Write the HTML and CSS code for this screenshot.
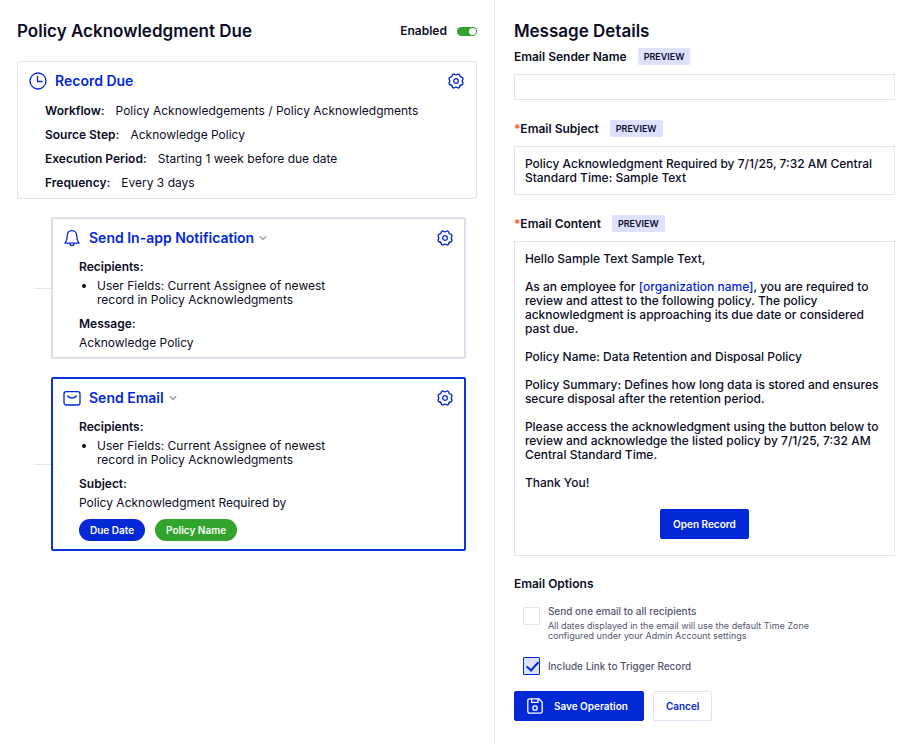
FILE: index.html
```html
<!DOCTYPE html>
<html lang="en">
<head>
  <meta charset="UTF-8">
  <meta name="viewport" content="width=device-width, initial-scale=1.0">
  <title>Policy Acknowledgment Due</title>
  <link rel="stylesheet" href="styles.css">
</head>
<body>
  <!-- Shared icons -->
  <svg class="sprite" aria-hidden="true">
    <symbol id="gear" viewBox="0 0 16 16">
      <path d="M5.9 .9 Q8 2.7 10.1 .9 L11.5 1.5 Q11.7 4.3 14.5 4.5 L15.1 5.9 Q13.3 8 15.1 10.1 L14.5 11.5 Q11.7 11.7 11.5 14.5 L10.1 15.1 Q8 13.3 5.9 15.1 L4.5 14.5 Q4.3 11.7 1.5 11.5 L.9 10.1 Q2.7 8 .9 5.9 L1.5 4.5 Q4.3 4.3 4.5 1.5Z"/>
      <circle cx="8" cy="8" r="2.3"/>
    </symbol>
    <symbol id="chevron" viewBox="0 0 8 8">
      <path d="M1.2 2.8 4 5.4 6.8 2.8"/>
    </symbol>
  </svg>

  <div class="layout">
    <main class="flow">
      <header class="flow-header">
        <h1>Policy Acknowledgment Due</h1>
        <label class="enabled">Enabled <input type="checkbox" class="toggle" checked></label>
      </header>

      <section class="card trigger">
        <div class="card-head">
          <svg class="icon" viewBox="0 0 18 18"><circle cx="9" cy="9" r="8"/><path d="M8.5 4.5V9.5H13"/></svg>
          <h2>Record Due</h2>
          <button class="settings" aria-label="Record Due settings"><svg><use href="#gear"/></svg></button>
        </div>
        <dl class="details">
          <div><dt>Workflow:</dt><dd>Policy Acknowledgements / Policy Acknowledgments</dd></div>
          <div><dt>Source Step:</dt><dd>Acknowledge Policy</dd></div>
          <div><dt>Execution Period:</dt><dd>Starting 1 week before due date</dd></div>
          <div><dt>Frequency:</dt><dd>Every 3 days</dd></div>
        </dl>
      </section>

      <section class="card step">
        <div class="card-head">
          <svg class="icon" viewBox="0 0 18 18"><path d="M2 14.2C3.4 12.5 4.2 10.5 4.2 7.3 4.2 4 6 1.7 9 1.7S13.8 4 13.8 7.3C13.8 10.5 14.6 12.5 16 14.2Z"/><path d="M6.8 14.6C7 16 7.9 16.6 9 16.6S11 16 11.2 14.6"/></svg>
          <h2><button class="step-name">Send In-app Notification <svg><use href="#chevron"/></svg></button></h2>
          <button class="settings" aria-label="Notification settings"><svg><use href="#gear"/></svg></button>
        </div>
        <div class="step-body">
          <h3>Recipients:</h3>
          <ul>
            <li>User Fields: Current Assignee of newest record in Policy Acknowledgments</li>
          </ul>
          <h3>Message:</h3>
          <p>Acknowledge Policy</p>
        </div>
      </section>

      <section class="card step active">
        <div class="card-head">
          <svg class="icon" viewBox="0 0 18 18"><rect x="1" y="2.6" width="16" height="13.4" rx="2.2"/><path d="M4.6 7C6.8 9.7 11.2 9.7 13.4 7"/></svg>
          <h2><button class="step-name">Send Email <svg><use href="#chevron"/></svg></button></h2>
          <button class="settings" aria-label="Email settings"><svg><use href="#gear"/></svg></button>
        </div>
        <div class="step-body">
          <h3>Recipients:</h3>
          <ul>
            <li>User Fields: Current Assignee of newest record in Policy Acknowledgments</li>
          </ul>
          <h3>Subject:</h3>
          <p>Policy Acknowledgment Required by</p>
          <div class="pills">
            <span class="pill">Due Date</span>
            <span class="pill green">Policy Name</span>
          </div>
        </div>
      </section>
    </main>

    <form class="message">
      <h1>Message Details</h1>

      <div class="field-label">
        <label for="sender">Email Sender Name</label>
        <button type="button" class="preview">PREVIEW</button>
      </div>
      <input type="text" id="sender" class="box">

      <div class="field-label">
        <label for="subject"><span class="required">*</span>Email Subject</label>
        <button type="button" class="preview">PREVIEW</button>
      </div>
      <textarea id="subject" class="box" rows="2">Policy Acknowledgment Required by 7/1/25, 7:32 AM Central Standard Time: Sample Text</textarea>

      <div class="field-label">
        <span id="content-label"><span class="required">*</span>Email Content</span>
        <button type="button" class="preview">PREVIEW</button>
      </div>
      <div class="box email" role="group" aria-labelledby="content-label">
        <p>Hello Sample Text Sample Text,</p>
        <p>As an employee for <a href="#">[organization name]</a>, you are required to review and attest to the following policy. The policy acknowledgment is approaching its due date or considered past due.</p>
        <p>Policy Name: Data Retention and Disposal Policy</p>
        <p>Policy Summary: Defines how long data is stored and ensures secure disposal after the retention period.</p>
        <p>Please access the acknowledgment using the button below to review and acknowledge the listed policy by 7/1/25, 7:32 AM Central Standard Time.</p>
        <p>Thank You!</p>
        <button type="button" class="btn primary open">Open Record</button>
      </div>

      <h3 class="options-title">Email Options</h3>
      <div class="option">
        <input type="checkbox" id="one-email">
        <label for="one-email">Send one email to all recipients
          <small>All dates displayed in the email will use the default Time Zone configured under your Admin Account settings</small>
        </label>
      </div>
      <div class="option single">
        <input type="checkbox" id="include-link" checked>
        <label for="include-link">Include Link to Trigger Record</label>
      </div>

      <div class="actions">
        <button type="submit" class="btn primary save">
          <svg viewBox="0 0 16 16"><path d="M2.6.8H11.8L15.2 4.2V13.4Q15.2 15.2 13.4 15.2H2.6Q.8 15.2.8 13.4V2.6Q.8.8 2.6.8Z"/><path d="M4.6 1V4.4H11V1"/><circle cx="8" cy="10" r="2.2"/></svg>
          Save Operation
        </button>
        <button type="button" class="btn">Cancel</button>
      </div>
    </form>
  </div>
</body>
</html>
```
FILE: styles.css
```css
* {
  box-sizing: border-box;
}
body {
  margin: 0;
  font-family: Inter, sans-serif;
  font-size: 12px;
  line-height: 14px;
  color: #0d0d26;
  background: #fff;
}
h1, h2, h3, p, ul, dl, dd {
  margin: 0;
}
h1 {
  font-size: 17px;
  line-height: 22px;
  font-weight: 600;
}
h2 {
  font-size: 14px;
  line-height: 18px;
  font-weight: 600;
  color: #0328d6;
}
h3 {
  font-size: 12px;
  line-height: 14px;
  font-weight: 600;
}
button {
  font: inherit;
  color: inherit;
  padding: 0;
  border: 0;
  background: none;
  cursor: pointer;
}
svg {
  fill: none;
  stroke: #0328d6;
  stroke-width: 1.3;
  stroke-linecap: round;
  stroke-linejoin: round;
}
.sprite {
  display: none;
}
.layout {
  display: grid;
  grid-template-columns: 117fr 100fr;
  min-height: 100vh;
}

/* Left side */
.flow {
  padding: 20px 17px;
}
.flow-header {
  display: flex;
  justify-content: space-between;
  align-items: center;
  margin-bottom: 19px;
}
.enabled {
  display: flex;
  align-items: center;
  gap: 10px;
  font-weight: 600;
}
.toggle {
  appearance: none;
  display: flex;
  justify-content: flex-end;
  width: 20px;
  height: 9px;
  margin: 0;
  padding: 1px;
  border-radius: 5px;
  background: #30a42b;
}
.toggle::before {
  content: "";
  width: 7px;
  height: 7px;
  border-radius: 50%;
  background: #fff;
}
.toggle:not(:checked) {
  justify-content: flex-start;
  background: #b5b5c6;
}
.card {
  border: 1px solid #e2e2f0;
  border-radius: 3px;
  background: #fff;
}
.card-head {
  display: flex;
  align-items: center;
}
.icon {
  width: 18px;
  height: 18px;
  margin-right: 8px;
}
.settings {
  width: 16px;
  height: 16px;
  margin-left: auto;
}
.settings svg {
  display: block;
  width: 16px;
  height: 16px;
}
.trigger {
  padding: 10px 12px 8px 11px;
}
.details {
  display: grid;
  gap: 10px;
  padding: 14px 0 0 16px;
}
.details div {
  display: flex;
  gap: 11px;
}
.details dt {
  font-weight: 600;
}
.step {
  position: relative;
  margin: 18px 11px 0 34px;
  padding: 10px 11px 7px 10px;
  border-width: 2px;
  border-color: #dcdeec;
  border-radius: 2px;
}
.step::before {
  content: "";
  position: absolute;
  top: 50%;
  right: 100%;
  width: 17px;
  margin-right: 2px;
  border-top: 1px solid #e2e2f0;
}
.active {
  padding-bottom: 8px;
  border-color: #0b33d9;
}
.step-name {
  display: flex;
  align-items: center;
  gap: 5px;
}
.step-name svg {
  width: 8px;
  height: 8px;
  stroke: #9a9aae;
}
.step-body {
  padding: 13px 100px 0 16px;
}
.step-body ul {
  margin: 5px 0 10px;
  padding-left: 18px;
}
.step-body p {
  margin-top: 5px;
}
.pills {
  display: flex;
  gap: 10px;
  margin-top: 9px;
}
.pill {
  padding: 4px 11px;
  border-radius: 11px;
  font-size: 10px;
  font-weight: 600;
  color: #fff;
  background: #0328d6;
}
.green {
  background: #30a42b;
}

/* Right side */
.message {
  padding: 20px 21px 20px 19px;
  border-left: 1px solid #e2e2f0;
}
.field-label {
  display: flex;
  align-items: center;
  gap: 11px;
  margin: 20px 0 9px;
  font-weight: 600;
}
.message h1 + .field-label {
  margin-top: 6px;
}
.required {
  color: #fb4f2f;
}
.preview {
  padding: 2px 6px;
  border-radius: 2px;
  font-size: 9px;
  line-height: 13px;
  background: #dde1ff;
}
.box {
  display: block;
  width: 100%;
  padding: 10px 10px 9px;
  border: 1px solid #e2e2f0;
  font: inherit;
  font-weight: 500;
  color: inherit;
  background: #fff;
  resize: none;
}
input.box {
  height: 26px;
  padding: 5px 10px;
}
.email p {
  margin-bottom: 14px;
}
.email a {
  color: #0328d6;
  text-decoration: none;
}
.btn {
  height: 30px;
  padding: 0 12px;
  border: 1px solid #e2e2f0;
  border-radius: 2px;
  font-size: 10px;
  font-weight: 600;
  color: #0328d6;
}
.primary {
  border-color: #0328d6;
  color: #fff;
  background: #0328d6;
}
.open {
  display: block;
  margin: 19px auto 7px;
}
.options-title {
  margin: 21px 0 13px;
}
.option {
  display: flex;
  align-items: flex-start;
  gap: 8px;
  margin: 0 0 16px 9px;
  color: #56566f;
}
.option input {
  appearance: none;
  flex: none;
  width: 17px;
  height: 18px;
  margin: 3px 0 0;
  border: 1px solid #e2e2f0;
  border-radius: 1px;
}
.single {
  align-items: center;
}
.single input {
  margin-top: 0;
}
.option input:checked {
  border-color: #0328d6;
  background: #dde1ff;
}
.option input:checked::before {
  content: "";
  display: block;
  width: 5px;
  height: 10px;
  margin: 1px 0 0 5px;
  border: solid #0328d6;
  border-width: 0 2px 2px 0;
  transform: rotate(42deg);
}
.option label {
  font-size: 10px;
  font-weight: 500;
}
.option small {
  display: block;
  max-width: 275px;
  margin-top: 3px;
  font-size: 9px;
  line-height: 10px;
  font-weight: 400;
}
.actions {
  display: flex;
  gap: 9px;
}
.save {
  display: flex;
  align-items: center;
  gap: 11px;
  padding: 0 15px 0 12px;
}
.save svg {
  width: 16px;
  height: 16px;
  stroke: #fff;
}
```
